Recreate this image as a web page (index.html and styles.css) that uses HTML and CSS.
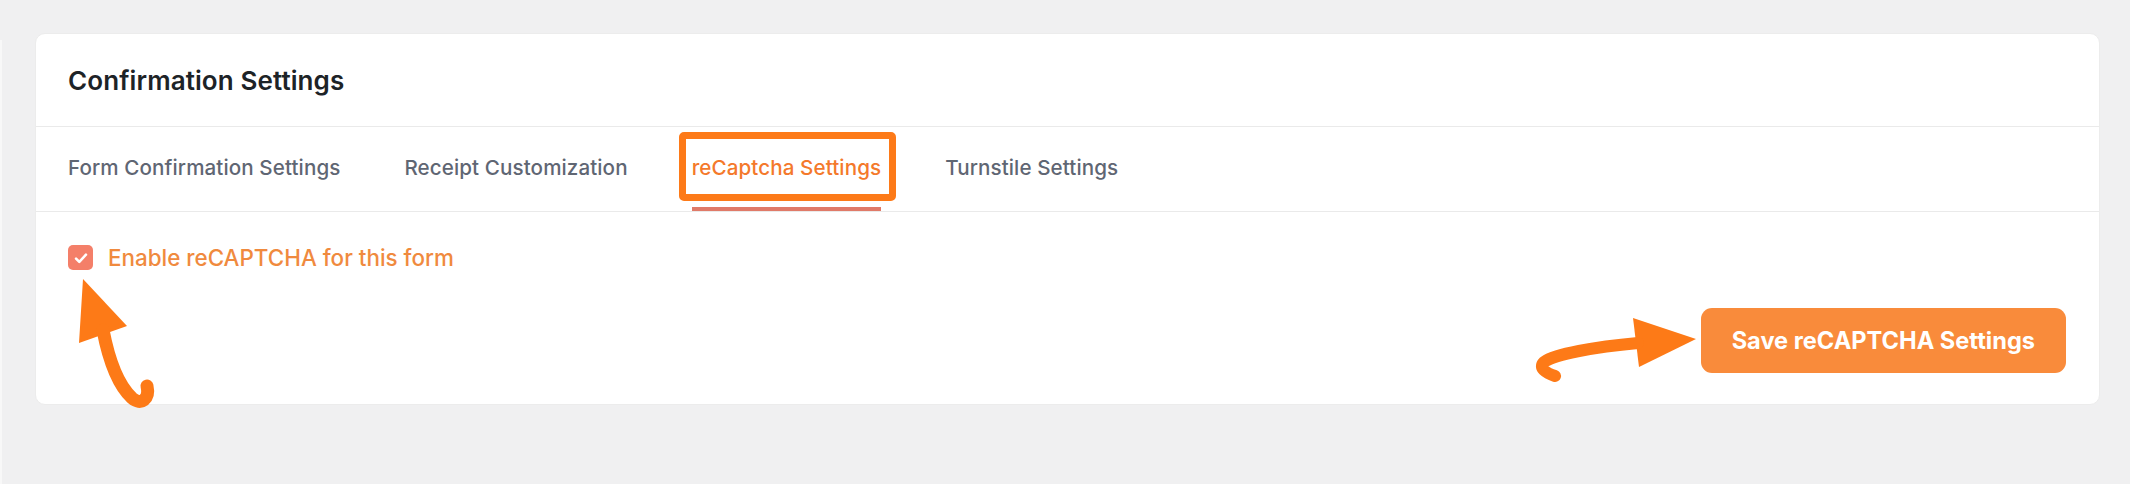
FILE: index.html
```html
<!DOCTYPE html>
<html lang="en">
<head>
<meta charset="utf-8">
<title>Confirmation Settings</title>
<link rel="stylesheet" href="styles.css">
</head>
<body>
<div class="edge"></div>
<main class="page">
  <section class="card">
    <header class="card-header">
      <h2 class="card-title">Confirmation Settings</h2>
    </header>
    <nav class="tabs">
      <a class="tab">Form Confirmation Settings</a>
      <a class="tab">Receipt Customization</a>
      <a class="tab active">reCaptcha Settings</a>
      <a class="tab">Turnstile Settings</a>
    </nav>
    <div class="card-body">
      <label class="check-row">
        <span class="checkbox">
          <svg viewBox="0 0 16 16" width="18" height="18"><path d="M3.6 8.5l2.9 2.9 5.9-6.3" fill="none" stroke="#fff" stroke-width="2.3" stroke-linecap="round" stroke-linejoin="round"/></svg>
        </span>
        <span class="check-label">Enable reCAPTCHA for this form</span>
      </label>
      <div class="actions">
        <button class="save-btn">Save reCAPTCHA Settings</button>
      </div>
    </div>
  </section>
</main>
<svg class="annotations" width="2130" height="484" viewBox="0 0 2130 484">
  <polygon points="83,279 79,343 127,326" fill="#fd7a17"/>
  <path d="M103 330 C 108 356, 117 384, 132 398 C 141 406, 150 399, 147 386" fill="none" stroke="#fd7a17" stroke-width="13" stroke-linecap="round"/>
  <polygon points="1696,339 1633,318 1639,367" fill="#fd7a17"/>
  <path d="M1638 343 C 1595 347, 1555 354, 1544 362 C 1538 368, 1546 373, 1555 376" fill="none" stroke="#fd7a17" stroke-width="12" stroke-linecap="round"/>
</svg>
</body>
</html>
```
FILE: styles.css
```css
* { box-sizing: border-box; }
html, body { margin: 0; padding: 0; }
body {
  position: relative;
  width: 2130px;
  height: 484px;
  overflow: hidden;
  background: #f0f0f1;
  font-family: Inter, "Noto Sans", "Liberation Sans", sans-serif;
  display: flex;
  align-items: flex-start;
}
.edge {
  width: 2px;
  height: 444px;
  margin-top: 40px;
  background: #f8f8f8;
}
.page {
  flex: 1;
  padding: 33px 30px 0 33px;
}
.card {
  background: #fff;
  border: 1px solid #ececec;
  border-radius: 10px;
}
.card-header {
  height: 93px;
  display: flex;
  align-items: center;
  padding: 0 32px;
  border-bottom: 1px solid #eaeaea;
}
.card-title {
  margin: 0;
  font-size: 26px;
  font-weight: 600;
  color: #1d2327;
  letter-spacing: 0.1px;
}
.tabs {
  display: flex;
  gap: 64px;
  padding: 0 32px;
  border-bottom: 1px solid #eaeaea;
}
.tab {
  position: relative;
  height: 84px;
  display: flex;
  align-items: center;
  border-bottom: 4px solid transparent;
  font-size: 20.6px;
  font-weight: 500;
  letter-spacing: 0.1px;
  color: #5f6673;
}
.tab.active {
  color: #f4792b;
  border-bottom-color: #e07a68;
}
.tab.active::after {
  content: "";
  position: absolute;
  left: -13px;
  right: -15px;
  top: 5px;
  bottom: 6px;
  border: 7px solid #fd7a18;
  border-radius: 5px;
}
.card-body {
  padding: 32px 33px 31px 32px;
}
.check-row {
  display: flex;
  align-items: center;
  gap: 15px;
}
.checkbox {
  width: 25px;
  height: 25px;
  border-radius: 5px;
  background: #f47f69;
  display: flex;
  align-items: center;
  justify-content: center;
}
.check-label {
  font-size: 22.4px;
  font-weight: 500;
  color: #f08a3e;
}
.actions {
  display: flex;
  justify-content: flex-end;
  margin-top: 37px;
}
.save-btn {
  height: 65px;
  padding: 0 31px;
  border: 0;
  border-radius: 11px;
  background: #f98b3b;
  color: #fff;
  font-family: Inter, "Noto Sans", "Liberation Sans", sans-serif;
  font-size: 23.6px;
  font-weight: 700;
}
.annotations {
  position: absolute;
  left: 0;
  top: 0;
  pointer-events: none;
}
```
